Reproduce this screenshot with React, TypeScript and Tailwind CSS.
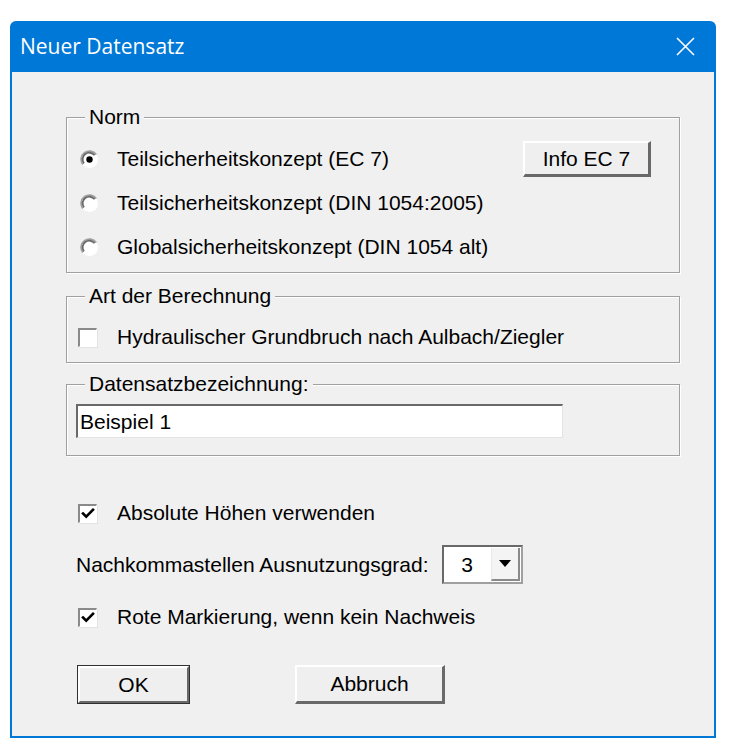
import React from "react";

const font = { fontFamily: '"Liberation Sans", Arial, sans-serif' };

function Radio({ checked }: { checked?: boolean }) {
  return (
    <svg width="19" height="19" viewBox="0 0 19 19" className="shrink-0">
      <circle cx="9.5" cy="9.5" r="8.5" fill="#ffffff" />
      <path d="M16.2 4.5 A8.2 8.2 0 0 0 2.8 14.5" fill="none" stroke="#a0a0a0" strokeWidth="1.8" />
      <path d="M14.6 5.3 A6.6 6.6 0 0 0 4.0 13.4" fill="none" stroke="#6a6a6a" strokeWidth="1.8" />
      {checked && <circle cx="9.5" cy="9.5" r="3.2" fill="#000000" />}
    </svg>
  );
}

function Check({ checked }: { checked?: boolean }) {
  return (
    <div className="w-[19px] h-[19px] shrink-0 bg-white border-t-2 border-l-2 border-t-[#8a8a8a] border-l-[#8a8a8a] border-b border-r border-b-[#ffffff] border-r-[#ffffff] shadow-[1px_1px_0_#e3e3e3] flex items-center justify-center">
      {checked && (
        <svg width="14" height="14" viewBox="0 0 14 14">
          <path d="M2 6.5 L5.2 9.7 L12 2.8" fill="none" stroke="#000" strokeWidth="2.6" strokeLinecap="square" />
        </svg>
      )}
    </div>
  );
}

function Group({
  label,
  className,
  children,
}: {
  label: string;
  className: string;
  children?: React.ReactNode;
}) {
  return (
    <div
      className={
        "relative w-[614px] border border-[#a0a0a0] shadow-[inset_1px_1px_0_#ffffff,1px_1px_0_#ffffff] " +
        className
      }
    >
      <span className="absolute left-[18px] -top-[13px] px-[4px] bg-[#f0f0f0] text-[21px] leading-[24px] text-black">
        {label}
      </span>
      {children}
    </div>
  );
}

function Button({
  children,
  className,
  isDefault,
}: {
  children: React.ReactNode;
  className: string;
  isDefault?: boolean;
}) {
  if (isDefault) {
    return (
      <div className={"border border-[#303030] " + className}>
        <div className="w-full h-full bg-[#efefef] border-t-2 border-l-2 border-t-white border-l-white border-b-2 border-r-2 border-b-[#696969] border-r-[#696969] flex items-center justify-center text-[21px] text-black">
          {children}
        </div>
      </div>
    );
  }
  return (
    <div
      className={
        "bg-[#efefef] border-t-2 border-l-2 border-t-white border-l-white border-b-[3px] border-r-[3px] border-b-[#696969] border-r-[#696969] flex items-center justify-center text-[21px] text-black " +
        className
      }
    >
      {children}
    </div>
  );
}

export default function App() {
  return (
    <div className="w-[732px] h-[748px] bg-white overflow-hidden" style={font}>
      <div className="ml-[10px] mt-[21px] w-[706px] h-[717px] bg-[#0078d7] rounded-t-[6px] flex flex-col">
        {/* Title bar */}
        <div className="h-[51px] flex items-center justify-between pl-[10px] pr-[21px]">
          <span
            className="text-white text-[21px] leading-none"
            style={{ fontFamily: '"Open Sans", "Noto Sans", sans-serif' }}
          >
            Neuer Datensatz
          </span>
          <svg width="19" height="19" viewBox="0 0 19 19">
            <path d="M1 1 L18 18 M18 1 L1 18" stroke="#ffffff" strokeWidth="1.6" fill="none" />
          </svg>
        </div>
        {/* Content */}
        <div className="mx-[2px] mb-[2px] flex-1 bg-[#f0f0f0] pl-[54px] pt-[45px] flex flex-col">
          <Group label="Norm" className="h-[156px] pt-[19px] pl-[13px] pr-[28px]">
            <div className="h-[44px] flex items-center">
              <Radio checked />
              <span className="ml-[18px] text-[21px] text-black">Teilsicherheitskonzept (EC 7)</span>
              <div className="flex-1" />
              <Button className="w-[128px] h-[36px]">Info EC 7</Button>
            </div>
            <div className="h-[44px] flex items-center">
              <Radio />
              <span className="ml-[18px] text-[21px] text-black">Teilsicherheitskonzept (DIN 1054:2005)</span>
            </div>
            <div className="h-[44px] flex items-center">
              <Radio />
              <span className="ml-[18px] text-[21px] text-black">Globalsicherheitskonzept (DIN 1054 alt)</span>
            </div>
          </Group>

          <Group label="Art der Berechnung" className="mt-[23px] h-[67px] pt-[25px] pl-[11px]">
            <div className="flex items-center h-[30px]">
              <Check />
              <span className="ml-[20px] text-[21px] text-black">Hydraulischer Grundbruch nach Aulbach/Ziegler</span>
            </div>
          </Group>

          <Group label="Datensatzbezeichnung:" className="mt-[21px] h-[72px] pt-[19px] pl-[9px]">
            <div className="w-[487px] h-[34px] bg-white border-t-2 border-l-2 border-t-[#696969] border-l-[#696969] border-b border-r border-b-[#e3e3e3] border-r-[#e3e3e3] flex items-center pl-[2px] text-[21px] text-black">
              Beispiel 1
            </div>
          </Group>

          <div className="mt-[42px] h-[30px] flex items-center pl-[12px]">
            <Check checked />
            <span className="ml-[20px] text-[21px] text-black">Absolute Höhen verwenden</span>
          </div>

          <div className="mt-[17px] h-[39px] flex items-center pl-[10px]">
            <span className="text-[21px] text-black">Nachkommastellen Ausnutzungsgrad:</span>
            <div className="ml-[13px] w-[81px] h-[39px] bg-white border-t-2 border-l-2 border-t-[#696969] border-l-[#696969] border-b-2 border-r-2 border-b-[#a0a0a0] border-r-[#a0a0a0] flex items-stretch">
              <div className="flex-1 flex items-center justify-center text-[21px] text-black">3</div>
              <div className="w-[29px] my-[1px] mr-[1px] bg-[#f4f4f4] border-l border-l-[#e8e8e8] border-b-2 border-r-2 border-b-[#8a8a8a] border-r-[#8a8a8a] flex items-center justify-center">
                <svg width="12" height="7" viewBox="0 0 12 7">
                  <path d="M0 0 L12 0 L6 7 Z" fill="#000" />
                </svg>
              </div>
            </div>
          </div>

          <div className="mt-[18px] h-[30px] flex items-center pl-[12px]">
            <Check checked />
            <span className="ml-[20px] text-[21px] text-black">Rote Markierung, wenn kein Nachweis</span>
          </div>

          <div className="mt-[33px] flex items-center pl-[11px]">
            <Button isDefault className="w-[113px] h-[39px]">OK</Button>
            <Button className="ml-[105px] w-[150px] h-[39px]">Abbruch</Button>
          </div>
        </div>
      </div>
    </div>
  );
}
